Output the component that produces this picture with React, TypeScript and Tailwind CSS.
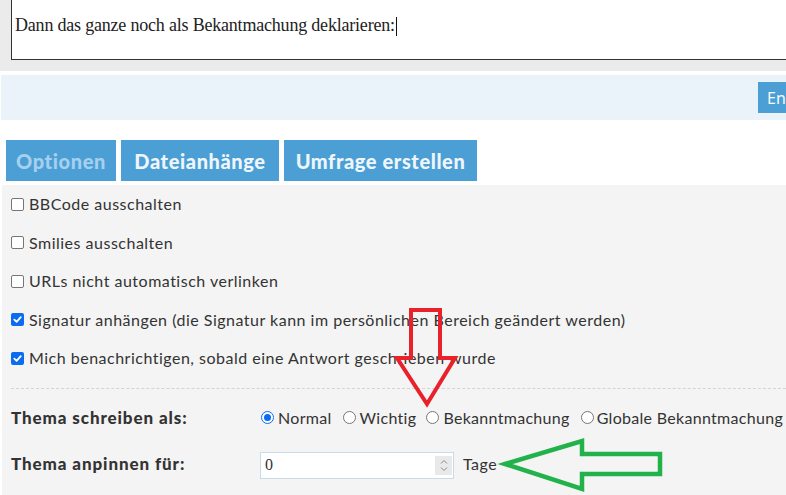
import React from "react";

const body = { fontFamily: "Lato, 'Noto Sans', sans-serif" };

function Box({ checked }: { checked?: boolean }) {
  if (checked) {
    return (
      <span className="inline-flex h-[13px] w-[13px] shrink-0 items-center justify-center rounded-[2px] bg-[#0b6cf0]">
        <svg width="9" height="9" viewBox="0 0 10 10">
          <path d="M1.5 5.2 L4 7.6 L8.6 2.4" stroke="#fff" strokeWidth="2" fill="none" strokeLinecap="round" strokeLinejoin="round" />
        </svg>
      </span>
    );
  }
  return <span className="inline-block h-[13px] w-[13px] shrink-0 rounded-[2px] border border-[#767676] bg-white" />;
}

function Radio({ checked }: { checked?: boolean }) {
  if (checked) {
    return (
      <span className="inline-flex h-[13px] w-[13px] shrink-0 items-center justify-center rounded-full border-[1.5px] border-[#0b6cf0] bg-white">
        <span className="h-[7px] w-[7px] rounded-full bg-[#0b6cf0]" />
      </span>
    );
  }
  return <span className="inline-block h-[13px] w-[13px] shrink-0 rounded-full border border-[#767676] bg-white" />;
}

const checks: [string, boolean][] = [
  ["BBCode ausschalten", false],
  ["Smilies ausschalten", false],
  ["URLs nicht automatisch verlinken", false],
  ["Signatur anhängen (die Signatur kann im persönlichen Bereich geändert werden)", true],
  ["Mich benachrichtigen, sobald eine Antwort geschrieben wurde", true],
];

export default function App() {
  return (
    <div className="relative h-[495px] w-[786px] overflow-hidden bg-white text-[#333]" style={body}>
      {/* editor frame */}
      <div className="h-[71px] bg-[#ebebeb] pl-[11px]">
        <div className="h-[60px] w-[900px] border-b border-l border-[#333] bg-white pl-[3px] pt-[13px]">
          <span className="text-[18px] leading-[24px] tracking-[-0.2px] text-[#222]" style={{ fontFamily: "'Liberation Serif', serif" }}>
            Dann das ganze noch als Bekantmachung deklarieren:
          </span>
          <span className="ml-[1px] inline-block h-[19px] w-[1px] bg-[#111] align-middle" />
        </div>
      </div>
      {/* submit bar */}
      <div className="mt-[4px] ml-[1px] flex h-[45px] items-start bg-[#eaf3fa] pt-[7px] pl-[757px]">
        <div className="flex h-[31px] items-center whitespace-nowrap bg-[#4b9fd5] pl-[9px] pr-3 text-[16px] text-white" style={{ fontFamily: "'Open Sans', sans-serif" }}>
          En
        </div>
      </div>
      {/* tabs */}
      <div className="mt-[20px] flex gap-[5px] pl-[6px] text-[20px] font-black tracking-[0.6px]">
        <div className="flex h-[41px] w-[110px] items-center justify-center bg-[#4b9fd5] text-[#a6d0ee]">Optionen</div>
        <div className="flex h-[41px] w-[158px] items-center justify-center bg-[#4b9fd5] text-[#eef6fc]">Dateianhänge</div>
        <div className="flex h-[41px] w-[193px] items-center justify-center bg-[#4b9fd5] text-[#eef6fc]">Umfrage erstellen</div>
      </div>
      {/* options panel */}
      <div className="mt-[4px] ml-[2px] h-[320px] bg-[#f4f4f4] pl-[9px] text-[16px] tracking-[0.5px]">
        {checks.map(([t, c]) => (
          <div key={t} className="flex h-[38.5px] items-center gap-[5px] whitespace-nowrap">
            <Box checked={c} />
            <span>{t}</span>
          </div>
        ))}
        <div className="mt-[10px] border-t border-dashed border-[#d4d4d4]" />
        <div className="mt-[10px] flex h-[38px] items-center whitespace-nowrap">
          <div className="w-[250px] shrink-0 text-[17px] font-black tracking-[0.9px]">Thema schreiben als:</div>
          <div className="flex shrink-0 items-center tracking-[0.3px]">
            <Radio checked />
            <span className="ml-[4px]">Normal</span>
            <span className="ml-[11px] flex"><Radio /></span>
            <span className="ml-[4px]">Wichtig</span>
            <span className="ml-[10px] flex"><Radio /></span>
            <span className="ml-[4px]">Bekanntmachung</span>
            <span className="ml-[11px] flex"><Radio /></span>
            <span className="ml-[3px]">Globale Bekanntmachung</span>
          </div>
        </div>
        <div className="mt-[8px] flex h-[38px] items-center whitespace-nowrap">
          <div className="w-[249px] shrink-0 text-[17px] font-black tracking-[0.9px]">Thema anpinnen für:</div>
          <div className="mt-[3px] flex h-[27px] w-[194px] shrink-0 items-center justify-between border border-[#c9dbea] bg-white pl-[4px] pr-[1px]">
            <span className="text-[16px]" style={{ fontFamily: "'Liberation Serif', serif" }}>0</span>
            <span className="flex h-[19px] w-[17px] flex-col items-center justify-center bg-[#e9e9e9]">
              <svg width="8" height="13" viewBox="0 0 8 13">
                <path d="M1 4.5 L4 1.5 L7 4.5 M1 8.5 L4 11.5 L7 8.5" stroke="#8a8a8a" strokeWidth="1" fill="none" />
              </svg>
            </span>
          </div>
          <span className="ml-[9px]">Tage</span>
        </div>
      </div>
      {/* annotation arrows */}
      <svg className="pointer-events-none absolute left-0 top-0" width="786" height="495">
        <polygon
          points="411,310 440,310 440,358 455,358 427,404 397,358 411,358"
          fill="none"
          stroke="#e8212a"
          strokeWidth="4"
          strokeLinejoin="miter"
        />
        <polygon
          points="505,464 582,441 582,454 660,454 660,474 582,474 582,489"
          fill="none"
          stroke="#22b24c"
          strokeWidth="4.5"
          strokeLinejoin="miter"
        />
      </svg>
    </div>
  );
}
